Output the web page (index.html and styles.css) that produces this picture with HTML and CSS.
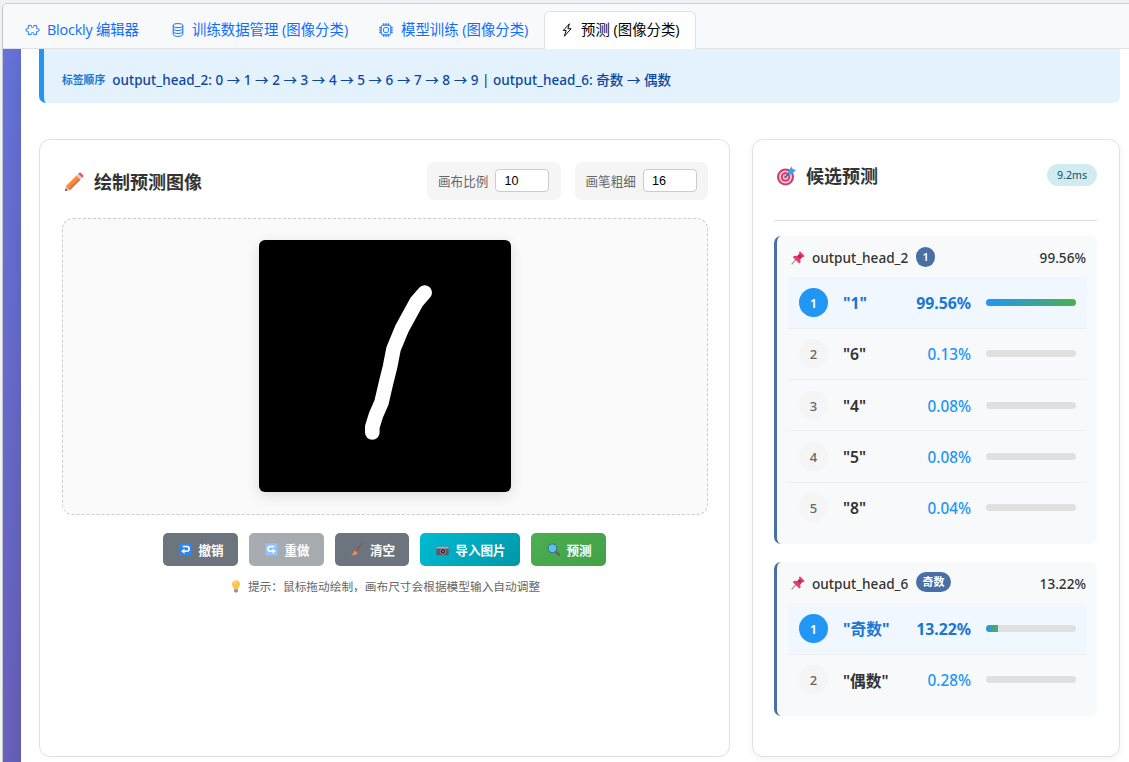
FILE: index.html
```
<!DOCTYPE html>
<html lang="zh-CN">
<head>
    <meta charset="UTF-8">
    <meta name="viewport" content="width=device-width, initial-scale=1.0">
    <title>预测 (图像分类)</title>
    <link rel="stylesheet" href="styles.css">
</head>
<body>
    <div class="window">
        <nav class="tabs">
            <a class="tab tab-blockly">
                <svg class="tab-icon" viewBox="0 0 18 16"><path d="M4 6V2.500h3.200c.8 0 .4 1 .4 1.500 0 .6.600 1 1.400 1s1.400-.4 1.400-1c0-.5-.4-1.500.4-1.500H14V6c0 .8.800.3 1.500.3 1 0 1.500.8 1.500 1.700s-.5 1.700-1.500 1.700c-.7 0-1.500-.5-1.500.3v3.500h-3.200c-.8 0-.4-1-.4-1.500 0-.6-.6-1-1.400-1s-1.400.4-1.400 1c0 .5.400 1.500-.4 1.500H4V10c0-.8-.8-.3-1.500-.3C1.500 9.700 1 8.900 1 8s.5-1.700 1.500-1.700C3.200 6.300 4 6.800 4 6z"/></svg>
                <span>Blockly 编辑器</span>
            </a>
            <a class="tab tab-data">
                <svg class="tab-icon" viewBox="0 0 16 16"><ellipse cx="8" cy="3" rx="5.500" ry="2.300"/><path d="M2.500 3v10c0 1.300 2.500 2.300 5.500 2.300s5.500-1 5.500-2.300V3M2.500 6.300c0 1.300 2.500 2.300 5.500 2.300s5.500-1 5.500-2.300M2.500 9.700C2.500 11 5 12 8 12s5.500-1 5.500-2.300"/></svg>
                <span>训练数据管理 (图像分类)</span>
            </a>
            <a class="tab tab-train">
                <svg class="tab-icon" viewBox="0 0 16 16"><rect x="2.500" y="2.500" width="11" height="11" rx="2"/><rect x="5.300" y="5.300" width="5.400" height="5.400" rx="1"/><path d="M5 .3v2.200M7 .3v2.200M9 .3v2.200M11 .3v2.200M5 13.500v2.200M7 13.500v2.200M9 13.500v2.200M11 13.500v2.200M.3 5h2.200M.3 7h2.200M.3 9h2.200M.3 11h2.200M13.500 5h2.200M13.500 7h2.200M13.500 9h2.200M13.500 11h2.200"/></svg>
                <span>模型训练 (图像分类)</span>
            </a>
            <a class="tab tab-predict active">
                <svg class="tab-icon" viewBox="0 0 16 16"><path d="M10.800.9 3.700 8.500H7L5 15.100l7.700-8.600H9z"/></svg>
                <span>预测 (图像分类)</span>
            </a>
        </nav>

        <div class="page">
            <main class="content">
                <div class="info-bar">
                    <span class="info-label">标签顺序</span>
                    <span class="info-value">output_head_2: 0 → 1 → 2 → 3 → 4 → 5 → 6 → 7 → 8 → 9 | output_head_6: 奇数 → 偶数</span>
                </div>

                <div class="columns">
                    <section class="card draw-card">
                        <div class="draw-header">
                            <h3>
                                <svg class="title-icon" viewBox="0 0 20 20"><path d="M1 19l1-5 4 4z" fill="#d9b1a0"/><path d="M1 19l.5-2.400 1.900 1.900z" fill="#5b4350"/><path d="M2 14 12.500 3.500l4 4L6 18z" fill="#fb8b3c"/><path d="M4.700 16.700 15.200 6.200l1.300 1.300L6 18z" fill="#e86a3f"/><path d="m12.500 3.500 1.700-1.700 4 4-1.700 1.700z" fill="#d5cfe3"/><path d="M14.200 1.800 15 1q1-.8 2 0l2 2q.8 1 0 2l-.8.800z" fill="#f8504e"/></svg>
                                绘制预测图像
                            </h3>
                            <div class="settings">
                                <label class="setting">画布比例<input type="text" value="10"></label>
                                <label class="setting">画笔粗细<input type="text" value="16"></label>
                            </div>
                        </div>

                        <div class="canvas-area">
                            <svg class="canvas" viewBox="0 0 252 252"><path d="M165.700 52.500 157.500 62 143 88.500 134.500 109 131 127 127 143 122.500 162.500 117 175 113.300 187v5.500"/></svg>
                        </div>

                        <div class="actions">
                            <button class="btn">
                                <svg class="btn-icon" viewBox="0 0 14 14"><rect x=".5" y=".5" width="13" height="13" rx="1.500" fill="#2f86ee"/><path d="M4 3.800h4.500a2.500 2.500 0 0 1 0 5H5" fill="none" stroke="#fff" stroke-width="1.700"/><path d="M6 6v5.600L2.300 8.800z" fill="#fff"/></svg>
                                撤销
                            </button>
                            <button class="btn" disabled>
                                <svg class="btn-icon" viewBox="0 0 14 14"><rect x=".5" y=".5" width="13" height="13" rx="1.500" fill="#4d9bff"/><path d="M10 3.800H5.500a2.500 2.500 0 0 0 0 5H9" fill="none" stroke="#fff" stroke-width="1.700"/><path d="M8 6v5.600l3.700-2.800z" fill="#fff"/></svg>
                                重做
                            </button>
                            <button class="btn btn-clear">
                                <svg class="btn-icon" viewBox="0 0 14 14"><path d="M11.800.5 6 8.300" stroke="#a83a3f" stroke-width="1.100"/><path d="M5 7.300 7.500 9.200 6 12.500l-5.700 1q2.700-2.200 3.100-4.500z" fill="#f28b57"/><path d="m5 7.300 2.500 1.900-.6 1.200L4 8.400z" fill="#d6453d"/></svg>
                                清空
                            </button>
                            <button class="btn btn-import">
                                <svg class="btn-icon" viewBox="0 0 14 14"><path d="M.5 4h13v9H.5z" fill="#5d5562"/><path d="M.5 4h13v2H.5z" fill="#b3a8b5"/><circle cx="7.500" cy="9" r="3" fill="#2f2a35" stroke="#aaa0b0" stroke-width=".8"/><circle cx="7.500" cy="9" r="1" fill="#8e8ba8"/></svg>
                                导入图片
                            </button>
                            <button class="btn btn-predict">
                                <svg class="btn-icon" viewBox="0 0 14 14"><path d="m9 9 3.700 3.500" stroke="#765080" stroke-width="2.600" stroke-linecap="round"/><circle cx="5.800" cy="5.700" r="4.700" fill="#56c5ee" stroke="#43617f" stroke-width="1"/></svg>
                                预测
                            </button>
                        </div>
                        <p class="hint">
                            <svg class="hint-icon" viewBox="0 0 10 13"><path d="M5 .5a4 4 0 0 1 4 4C9 6.500 7.200 7 7 9.300H3C2.800 7 1 6.500 1 4.500a4 4 0 0 1 4-4z" fill="#fcc44c"/><path d="M3.300 2.500q1-1.200 2-.8Q3.500 3 3.500 5z" fill="#fff1b5"/><path d="M3.100 9.300h3.800v2L6 12.500H4l-.9-1.200z" fill="#978ba5"/></svg>
                            提示：鼠标拖动绘制，画布尺寸会根据模型输入自动调整
                        </p>
                    </section>

                    <section class="card result-card">
                        <div class="result-header">
                            <h3>
                                <svg class="title-icon" viewBox="0 0 20 20"><circle cx="9.500" cy="11" r="8.500" fill="#d83a66"/><circle cx="9.500" cy="11" r="6.500" fill="#e9c8dc"/><circle cx="9.500" cy="11" r="4.700" fill="#d83a66"/><circle cx="9.500" cy="11" r="2.800" fill="#e9c8dc"/><circle cx="9.500" cy="11" r="1.300" fill="#d83a66"/><path d="m10 10.500 5-5" stroke="#266fbe" stroke-width="1.400"/><path d="m12 5.500 3.500-5 1.200 2.500 3.300 1L15.500 8.500l-3-.5z" fill="#35a5ef"/></svg>
                                候选预测
                            </h3>
                            <span class="time">9.2ms</span>
                        </div>
                        <div id="groups" class="groups"></div>
                    </section>
                </div>
            </main>
        </div>
    </div>

    <script>
        const groups = [
            { name: 'output_head_2', label: '1', score: '99.56%', items: [['1', 99.56], ['6', 0.13], ['4', 0.08], ['5', 0.08], ['8', 0.04]] },
            { name: 'output_head_6', label: '奇数', score: '13.22%', items: [['奇数', 13.22], ['偶数', 0.28]] }
        ];

        const pin = '<svg class="pin" viewBox="0 0 15 15"><path d="M.7 14.300 6 8.500" stroke="#9a939f" stroke-width="1.300"/><path d="m9.600.4 5 4.900-1.300 1.300-.9-.2-2.400 2.500.2 3.400-1.300 1.100L2 6.600l1.200-1.400 3.300.1L9 2.900l-.5-1.200z" fill="#e83c69"/><path d="m6.800 5.500 2.200-2.400 2.800 2.900-2 2.700z" fill="#bd2552"/></svg>';

        // Render one block per output head
        document.getElementById('groups').innerHTML = groups.map(group => `
            <div class="group">
                <div class="group-header">
                    ${pin}
                    <span class="group-name">${group.name}</span>
                    <span class="pill">${group.label}</span>
                    <span class="group-score">${group.score}</span>
                </div>
                ${group.items.map(([label, value], i) => `
                    <div class="item ${i === 0 ? 'top' : ''}">
                        <span class="rank">${i + 1}</span>
                        <span class="label">"${label}"</span>
                        <span class="percent">${value.toFixed(2)}%</span>
                        <div class="bar"><div class="fill" style="width: ${value}%"></div></div>
                    </div>`).join('')}
            </div>`).join('');
    </script>
</body>
</html>
```
FILE: styles.css
```
* {
    box-sizing: border-box;
}

body {
    margin: 0;
    padding: 3px 0 0 2px;
    height: 762px;
    overflow: hidden;
    background: #f0f2f8;
    font-family: "Noto Sans", "Noto Sans CJK SC", sans-serif;
    color: #333;
}

.window {
    height: 780px;
    border-top: 1px solid #ccced2;
    border-left: 1px solid #c4c6ca;
    border-top-left-radius: 5px;
    overflow: hidden;
}

/* Tabs */
.tabs {
    display: flex;
    align-items: flex-end;
    height: 45px;
    padding-left: 7px;
    background: #f8f9fb;
    border-bottom: 1px solid #dee2e6;
}

.tab {
    display: flex;
    align-items: center;
    height: 38px;
    padding: 0 0 2px 15px;
    margin-bottom: -1px;
    border: 1px solid transparent;
    border-bottom: none;
    border-radius: 6px 6px 0 0;
    font-family: "Open Sans", "Noto Sans CJK SC", sans-serif;
    font-size: 14.4px;
    line-height: 20px;
    color: #0d6efd;
    white-space: nowrap;
}

.tab-blockly {
    width: 145px;
    padding-left: 14px;
    letter-spacing: -0.2px;
}

.tab-data {
    width: 208px;
}

.tab-train {
    width: 181px;
    padding-left: 15px;
}

.tab-predict {
    width: 152px;
}

.tab.active {
    background: #fff;
    border-color: #dee2e6;
    color: #000;
}

.tab-icon {
    width: 14px;
    height: 14px;
    margin-right: 7px;
    fill: none;
    stroke: currentColor;
    stroke-width: 1.1;
    stroke-linejoin: round;
}

.tab-blockly .tab-icon {
    width: 15px;
}

.tab-train .tab-icon {
    margin-right: 8px;
}

/* Page */
.page {
    height: 732px;
    padding-left: 18px;
    background: linear-gradient(#6674dc, #6a61bb);
    overflow: hidden;
}

.content {
    height: 100%;
    padding: 0 9px 0 18px;
    background: #fff;
    box-shadow: 0 0 22px rgba(0, 0, 0, 0.15);
}

.info-bar {
    display: flex;
    align-items: center;
    height: 54px;
    padding: 6px 18px 0;
    margin-bottom: 36px;
    background: #e3f2fd;
    border-left: 5px solid #2196f3;
    border-radius: 0 0 7px 7px;
    white-space: nowrap;
}

.info-label {
    margin-right: 7px;
    font-size: 10.8px;
    font-weight: 600;
    color: #1976d2;
}

.info-value {
    font-size: 13.5px;
    font-weight: 500;
    letter-spacing: 0.03px;
    color: #0d47a1;
}

.columns {
    display: flex;
    gap: 22px;
}

.card {
    height: 618px;
    padding: 22px 21px 22px 22px;
    background: #fff;
    border: 1px solid #e0e0e0;
    border-radius: 11px;
}

.draw-card {
    width: 691px;
}

.result-card {
    width: 368px;
    padding: 21px 22px 21px 21px;
    box-shadow: 0 2px 9px rgba(0, 0, 0, 0.05);
}

h3 {
    display: flex;
    align-items: center;
    margin: 0;
    font-size: 18px;
    font-weight: 700;
    line-height: 28px;
}

.title-icon {
    width: 20px;
    height: 20px;
    margin: 0 10px 0 2px;
}

/* Drawing */
.draw-header {
    display: flex;
    align-items: center;
    justify-content: space-between;
    height: 38px;
    margin-bottom: 18px;
}

.draw-header h3 {
    padding-top: 2px;
}

.settings {
    display: flex;
    gap: 14px;
}

.setting {
    display: flex;
    align-items: center;
    gap: 7px;
    height: 38px;
    width: 133.5px;
    padding: 0 0 1px 11px;
    background: #f5f5f5;
    border-radius: 7px;
    font-size: 12.6px;
    color: #666;
}

.setting input {
    width: 54px;
    height: 23px;
    padding: 0 8px;
    border: 1px solid #ccc;
    border-radius: 4px;
    font-family: "Liberation Sans", Arial, sans-serif;
    font-size: 12.6px;
    color: #000;
}

.canvas-area {
    display: flex;
    justify-content: center;
    height: 297px;
    padding-top: 21px;
    margin-bottom: 18px;
    background: #fafafa;
    border: 1px dashed #ccc;
    border-radius: 11px;
}

.canvas {
    width: 252px;
    height: 252px;
    background: #000;
    border-radius: 6px;
    box-shadow: 0 4px 14px rgba(0, 0, 0, 0.12);
    fill: none;
    stroke: #fff;
    stroke-width: 14.6;
    stroke-linecap: round;
    stroke-linejoin: round;
}

.actions {
    display: flex;
    justify-content: center;
    gap: 11px;
    padding-right: 1px;
}

.btn {
    display: flex;
    align-items: center;
    justify-content: center;
    width: 75px;
    height: 33px;
    padding: 0 0 0 2px;
    border: none;
    border-radius: 5px;
    background: #6c757d;
    color: #fff;
    font-family: inherit;
    font-size: 12.6px;
    font-weight: 600;
    white-space: nowrap;
}

.btn:disabled {
    opacity: 0.6;
}

.btn-icon {
    width: 13px;
    height: 13px;
    margin-right: 6px;
}

.btn-clear {
    width: 74px;
}

.btn-import {
    width: 100px;
    background: linear-gradient(135deg, #00bcd4, #0097a7);
}

.btn-predict {
    background: linear-gradient(135deg, #4caf50, #43a047);
}

.hint {
    display: flex;
    align-items: center;
    justify-content: center;
    margin: 11px 0 0 1px;
    font-size: 11.7px;
    line-height: 18px;
    color: #666;
}

.hint-icon {
    width: 10px;
    height: 13px;
    margin-right: 7px;
}

/* Results */
.result-header {
    display: flex;
    justify-content: space-between;
    height: 60px;
    margin-bottom: 15px;
    border-bottom: 1px solid #e0e0e0;
}

.result-header h3 {
    height: 30px;
}

.time {
    width: 50px;
    height: 22px;
    margin-top: 3px;
    border-radius: 11px;
    background: #d1ecf1;
    color: #0c5460;
    font-size: 10.6px;
    line-height: 22px;
    text-align: center;
}

.groups {
    display: grid;
    gap: 18px;
}

.group {
    padding: 11px 10px 11px 11px;
    border-left: 3px solid #4a6fa5;
    border-radius: 7px;
    background: #f8f9fb;
}

.group-header {
    display: flex;
    align-items: center;
    height: 21px;
    margin-bottom: 9.3px;
    padding: 0 1px 0 3px;
    font-size: 13.6px;
    font-weight: 500;
}

.pin {
    width: 14px;
    height: 14px;
    margin-right: 7px;
}

.group-name {
    width: 97px;
}

.pill {
    height: 20px;
    margin: -2px 0 0 7px;
    padding: 0 6.5px;
    border-radius: 10px;
    background: #4a6fa5;
    color: #fff;
    font-size: 11px;
    font-weight: 600;
    line-height: 20px;
}

.group-score {
    margin-left: auto;
}

.item {
    display: flex;
    align-items: center;
    height: 51.35px;
    padding: 0 11px;
    border-bottom: 1px solid #eceef0;
}

.item:last-child {
    height: 50.3px;
    border-bottom: none;
}

.rank {
    width: 29px;
    height: 29px;
    margin-right: 15px;
    border-radius: 50%;
    background: #f5f5f5;
    color: #666;
    font-size: 13px;
    font-weight: 500;
    line-height: 30px;
    text-align: center;
}

.label {
    padding-top: 1px;
    font-size: 15.7px;
    font-weight: 600;
}

.percent {
    margin: 0 15px 0 auto;
    padding-top: 1px;
    font-size: 15.3px;
    font-weight: 500;
    color: #2196f3;
}

.bar {
    width: 90px;
    height: 7px;
    border-radius: 4px;
    background: #e0e0e0;
    overflow: hidden;
}

.fill {
    height: 100%;
    background: linear-gradient(90deg, #2196f3, #4caf50);
}

.top {
    background: #f0f7ff;
}

.top .rank {
    background: #2196f3;
    color: #fff;
    font-weight: 600;
}

.top .label,
.top .percent {
    color: #1976d2;
    font-weight: 700;
}

.top .percent {
    font-size: 15.8px;
}
```
